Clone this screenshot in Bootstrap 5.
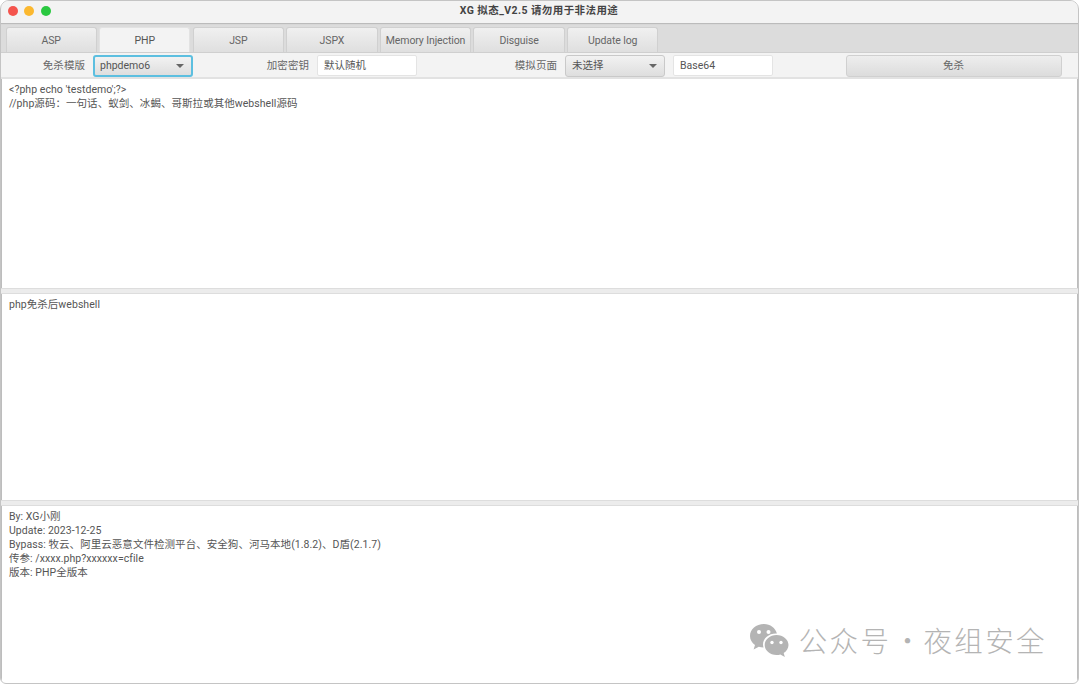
<!DOCTYPE html>
<html lang="zh">
<head>
<meta charset="utf-8">
<title>XG拟态_V2.5</title>
<link href="https://cdn.jsdelivr.net/npm/bootstrap@5.3.0/dist/css/bootstrap.min.css" rel="stylesheet">
<style>
html,body{width:1080px;height:684px;overflow:hidden;background:#fff}
body{font-family:"Roboto","Noto Sans CJK SC",sans-serif;font-size:10.5px;color:#555;line-height:14px}
.win{width:1079px;height:684px;border:1px solid #c4c4c4;border-radius:9px 9px 6px 6px;overflow:hidden;display:flex;flex-direction:column;background:#fff}
.tbar{height:22px;flex:none;background:#f3f3f3;position:relative;box-shadow:0 1px 1px #bbb;z-index:2}
.dot{width:10px;height:10px;border-radius:50%}
.dots{gap:6.3px;padding:5px 0 0 7px}
.ttl{position:absolute;left:0;right:0;top:3px;text-align:center;font-size:10.5px;font-weight:700;color:#444;padding-right:1px;letter-spacing:.42px}
.tabsbar{height:30px;flex:none;background:#dcdcdc;padding:4px 0 0 4.5px;gap:2.3px;border-bottom:1px solid #cfcfcf}
.tabx{width:91.3px;height:25px;border:1px solid #d0d0d0;border-bottom:0;border-radius:3px 3px 0 0;background:linear-gradient(#f0f0f0,#dfdfdf);display:flex;align-items:center;justify-content:center;color:#666;font-size:10.5px;padding:1px 0 0;letter-spacing:-.1px}
.tabx.on{background:#f3f3f3;color:#555;border-color:#e2e2e2}
.tools{height:26px;flex:none;background:#f3f3f3;align-items:center;border-bottom:2px solid #e2e2e2;padding-top:1px}
.lbl{color:#666;text-align:right;flex:none;letter-spacing:.05px}
.l1{width:84px}.l2{width:116px}.l3{width:140px}
.sel{width:100px;height:22px;flex:none;border:1px solid #c9c9c9;border-radius:3px;background:linear-gradient(#f2f2f2,#dedede);display:flex;align-items:center;justify-content:space-between;padding:0 6px;color:#555;font-size:10.5px}
.sel.act{border:2px solid #5cbfe0;padding:0 6px 0 5px}
.car{width:0;height:0;border-left:4px solid transparent;border-right:4px solid transparent;border-top:4px solid #666;margin-right:1px}
.inp{width:100px;height:21px;flex:none;border:1px solid #e4e4e4;border-radius:2px;background:#fff;padding:0 6px;font-size:10.5px;color:#555;box-shadow:none;min-height:0;line-height:19px}
.gobtn{width:216px;height:22px;flex:none;border:1px solid #d0d0d0;border-radius:3px;background:linear-gradient(#eeeeee,#dcdcdc);color:#666;font-size:10.5px;padding:0;line-height:20px;margin-left:72.5px}
.pane{padding:4px 7px;color:#555;white-space:pre-wrap;border-left:1px solid #bdbdbd;border-right:1px solid #bdbdbd;letter-spacing:.05px}
.p1{height:209px;flex:none}.p2{height:206px;flex:none}.p3{flex:1 1 auto;position:relative}
.split{height:6px;flex:none;background:#ececec;border-top:1px solid #ddd;border-bottom:1px solid #ddd}
.wm{position:absolute;right:30px;bottom:26px;gap:10px;color:#b4b4b4;font-size:28.5px;line-height:34px;letter-spacing:2.4px;font-family:"Noto Sans CJK SC",sans-serif;font-weight:300;align-items:center;white-space:nowrap}
.wdot{display:inline-block;width:32px;text-align:center;letter-spacing:0}
</style>
</head>
<body>
<div class="win">
  <div class="tbar">
    <div class="d-flex dots">
      <span class="dot" style="background:#f4544d"></span>
      <span class="dot" style="background:#fbb82f"></span>
      <span class="dot" style="background:#2ac840"></span>
    </div>
    <div class="ttl">XG 拟态_V2.5 请勿用于非法用途</div>
  </div>
  <div class="tabsbar d-flex">
    <div class="tabx">ASP</div>
    <div class="tabx on">PHP</div>
    <div class="tabx">JSP</div>
    <div class="tabx">JSPX</div>
    <div class="tabx">Memory Injection</div>
    <div class="tabx">Disguise</div>
    <div class="tabx">Update log</div>
  </div>
  <div class="tools d-flex">
    <span class="lbl l1">免杀模版</span>
    <div class="sel act ms-2">phpdemo6<span class="car"></span></div>
    <span class="lbl l2">加密密钥</span>
    <div class="inp ms-2">默认随机</div>
    <span class="lbl l3">模拟页面</span>
    <div class="sel ms-2">未选择<span class="car"></span></div>
    <div class="inp ms-2">Base64</div>
    <button class="btn gobtn" type="button">免杀</button>
  </div>
  <div class="pane p1">&lt;?php echo 'testdemo';?&gt;
//php源码：一句话、蚁剑、冰蝎、哥斯拉或其他webshell源码</div>
  <div class="split"></div>
  <div class="pane p2">php免杀后webshell</div>
  <div class="split"></div>
  <div class="pane p3">By: XG小刚
Update: 2023-12-25
Bypass: 牧云、阿里云恶意文件检测平台、安全狗、河马本地(1.8.2)、D盾(2.1.7)
传参: /xxxx.php?xxxxxx=cfile
版本: PHP全版本
<div class="wm d-flex">
  <svg width="40" height="34" viewBox="0 0 40 34" aria-hidden="true">
    <path fill="#b4b4b4" d="M15 1C7 1 1 6.400 1 13c0 3.700 1.900 6.900 5 9.100L4.600 26.500 9.800 23.800c1.500.5 3 .8 4.700.8-.3-1-.5-2-.5-3 0-6.200 5.700-11.100 12.900-11.100h1C26.500 5 21.300 1 15 1z"/>
    <path fill="#b4b4b4" d="M27.500 12C21 12 15.700 16.500 15.700 22s5.300 10 11.800 10c1.400 0 2.700-.2 3.900-.6L35.800 34l-1.100-4c2.900-1.900 4.800-4.800 4.800-8 0-5.500-5.400-10-12-10z"/>
    <circle cx="10" cy="9" r="2" fill="#fff"/><circle cx="19.500" cy="9" r="2" fill="#fff"/>
    <circle cx="23" cy="19.500" r="1.700" fill="#fff"/><circle cx="32" cy="19.500" r="1.700" fill="#fff"/>
  </svg>
  <span>公众号<span class="wdot">·</span>夜组安全</span>
</div></div>
</div>
</body>
</html>
